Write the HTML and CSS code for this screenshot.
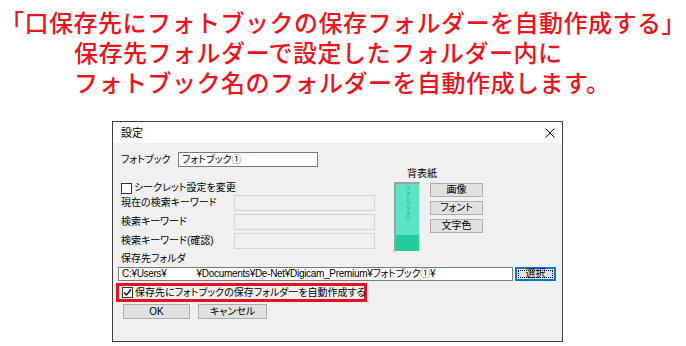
FILE: index.html
```html
<!DOCTYPE html>
<html lang="ja">
<head>
    <meta charset="UTF-8">
    <title>設定</title>
    <link rel="stylesheet" href="styles.css">
</head>
<body>
    <div class="caption">
        <p class="caption-line">「口保存先にフォトブックの保存フォルダーを自動作成する」</p>
        <p class="caption-line indent">保存先フォルダーで設定したフォルダー内に</p>
        <p class="caption-line indent">フォトブック名のフォルダーを自動作成します。</p>
    </div>

    <div class="dialog">
        <div class="titlebar">
            <span class="title">設定</span>
            <svg class="close" width="10" height="10" viewBox="0 0 10 10">
                <path d="M0.5 0.5 L9.5 9.5 M9.5 0.5 L0.5 9.5" stroke="#000" stroke-width="1" fill="none"/>
            </svg>
        </div>

        <div class="dialog-body">
            <div class="name-row">
                <span class="name-label">フォトブック</span>
                <div class="field name-field">フォトブック①</div>
            </div>

            <div class="middle">
                <div class="secret">
                    <div class="check-row">
                        <span class="checkbox"></span>
                        <span>シークレット設定を変更</span>
                    </div>
                    <div class="kw-row">
                        <span class="kw-label">現在の検索キーワード</span>
                        <div class="field disabled"></div>
                    </div>
                    <div class="kw-row">
                        <span class="kw-label">検索キーワード</span>
                        <div class="field disabled"></div>
                    </div>
                    <div class="kw-row">
                        <span class="kw-label">検索キーワード(確認)</span>
                        <div class="field disabled"></div>
                    </div>
                </div>

                <div class="spine-area">
                    <div class="spine-title">背表紙</div>
                    <div class="spine-body">
                        <div class="spine">
                            <div class="spine-top"><span class="spine-text">フォトブック①</span></div>
                            <div class="spine-bottom"></div>
                        </div>
                        <div class="spine-buttons">
                            <div class="btn spine-btn">画像</div>
                            <div class="btn spine-btn">フォント</div>
                            <div class="btn spine-btn">文字色</div>
                        </div>
                    </div>
                </div>
            </div>

            <div class="folder-label">保存先フォルダ</div>
            <div class="folder-row">
                <div class="field path-field">
                    <span class="path-user">C:¥Users¥</span><span>¥Documents¥De-Net¥Digicam_Premium¥フォトブック①¥</span>
                </div>
                <div class="btn select-btn"><span class="focus">選択</span></div>
            </div>

            <div class="highlight">
                <span class="checkbox">
                    <svg width="9" height="9" viewBox="0 0 9 9">
                        <path d="M1 4.5 L3.5 7 L8 1.5" stroke="#000" stroke-width="1.2" fill="none"/>
                    </svg>
                </span>
                <span>保存先にフォトブックの保存フォルダーを自動作成する</span>
            </div>

            <div class="actions">
                <div class="btn ok-btn">OK</div>
                <div class="btn cancel-btn">キャンセル</div>
            </div>
        </div>
    </div>
</body>
</html>
```

FILE: styles.css
```css
:root {
    --caption-red: #e8141e;
    --face: #f0f0f0;
    --button-face: #e1e1e1;
    --button-edge: #adadad;
    --field-edge: #7a7a7a;
}

body {
    margin: 0;
    background-color: #fff;
    font-family: "Noto Sans CJK JP", sans-serif;
}

/* red explanation above the dialog */
.caption {
    padding-top: 7px;
}

.caption-line {
    margin: 0;
    color: var(--caption-red);
    font-size: 24px;
    font-weight: 500;
    line-height: 30px;
    letter-spacing: 0.5px;
    white-space: nowrap;
}

.caption-line.indent {
    padding-left: 74px;
}

/* dialog window */
.dialog {
    margin: 24px 0 0 112px;
    width: 451px;
    box-sizing: border-box;
    border: 1px solid #423c38;
    font-family: "Liberation Sans", "Noto Sans CJK JP", sans-serif;
    font-size: 10px;
    line-height: 12px;
    font-feature-settings: "palt";
    color: #000;
    white-space: nowrap;
}

.titlebar {
    height: 21px;
    background-color: #fff;
    display: flex;
    align-items: center;
    justify-content: space-between;
    padding: 0 7px 0 8px;
}

.title {
    font-size: 11px;
}

.dialog-body {
    background-color: var(--face);
    padding: 9px 0 22px;
}

.field {
    box-sizing: border-box;
    background-color: #fff;
    border: 1px solid var(--field-edge);
    display: flex;
    align-items: center;
    padding-left: 3px;
}

.field.disabled {
    background-color: var(--face);
    border-color: #d4d4d4;
    width: 141px;
    height: 16px;
}

.btn {
    box-sizing: border-box;
    background-color: var(--button-face);
    border: 1px solid var(--button-edge);
    display: flex;
    align-items: center;
    justify-content: center;
}

.name-row {
    display: flex;
    align-items: center;
    height: 15px;
    margin-left: 8px;
}

.name-label {
    width: 57px;
}

.name-field {
    width: 140px;
    height: 15px;
}

.middle {
    display: flex;
    margin-left: 8px;
}

.secret {
    width: 254px;
    padding-top: 14px;
}

.check-row {
    display: flex;
    align-items: center;
    gap: 2px;
    height: 14px;
}

.checkbox {
    box-sizing: border-box;
    width: 11px;
    height: 11px;
    border: 1px solid #333;
    background-color: #fff;
    display: flex;
    align-items: center;
    justify-content: center;
    flex-shrink: 0;
}

.kw-row {
    display: flex;
    align-items: center;
    height: 16px;
    margin-bottom: 3px;
}

.kw-label {
    width: 113px;
}

.spine-area {
    margin-left: 19px;
}

.spine-title {
    height: 13px;
    line-height: 13px;
    margin-left: 13px;
}

.spine-body {
    display: flex;
    margin-top: 2px;
}

.spine {
    box-sizing: border-box;
    width: 26px;
    height: 70px;
    border-left: 2px solid #a0a0a0;
    border-top: 2px solid #a0a0a0;
    border-right: 1px solid #e3e3e3;
    border-bottom: 1px solid #fff;
    display: flex;
    flex-direction: column;
}

.spine-top {
    flex: 1;
    background-color: #5be3c5;
    display: flex;
    justify-content: center;
    padding-top: 2px;
}

.spine-text {
    writing-mode: vertical-rl;
    font-size: 5px;
    line-height: 6px;
    color: #4c8f7f;
}

.spine-bottom {
    height: 16px;
    background-color: #24cc9b;
}

.spine-buttons {
    display: flex;
    flex-direction: column;
    gap: 4px;
    margin: 1px 0 0 10px;
}

.spine-btn {
    width: 53px;
    height: 14px;
}

.folder-label {
    margin-left: 8px;
    height: 13px;
    line-height: 13px;
}

.folder-row {
    display: flex;
    gap: 2px;
    margin: 2px 0 0 5px;
}

.path-field {
    width: 395px;
    height: 14px;
    letter-spacing: -0.3px;
}

.path-user {
    margin-right: 30px;
}

.select-btn {
    width: 41px;
    height: 14px;
    border: 1px solid #0078d7;
    box-shadow: inset 0 0 0 1px #0078d7;
    padding: 2px;
}

.select-btn .focus {
    flex: 1;
    align-self: stretch;
    border: 1px dotted #000;
    display: flex;
    align-items: center;
    justify-content: center;
    line-height: 8px;
}

.highlight {
    box-sizing: border-box;
    width: 251px;
    height: 19px;
    margin: 2px 0 0 3px;
    border: 3px solid #e8101c;
    display: flex;
    align-items: center;
    gap: 2px;
    padding-left: 3px;
}

.actions {
    display: flex;
    gap: 8px;
    margin: 2px 0 0 10px;
}

.ok-btn {
    width: 67px;
    height: 15px;
}

.cancel-btn {
    width: 69px;
    height: 15px;
}
```
